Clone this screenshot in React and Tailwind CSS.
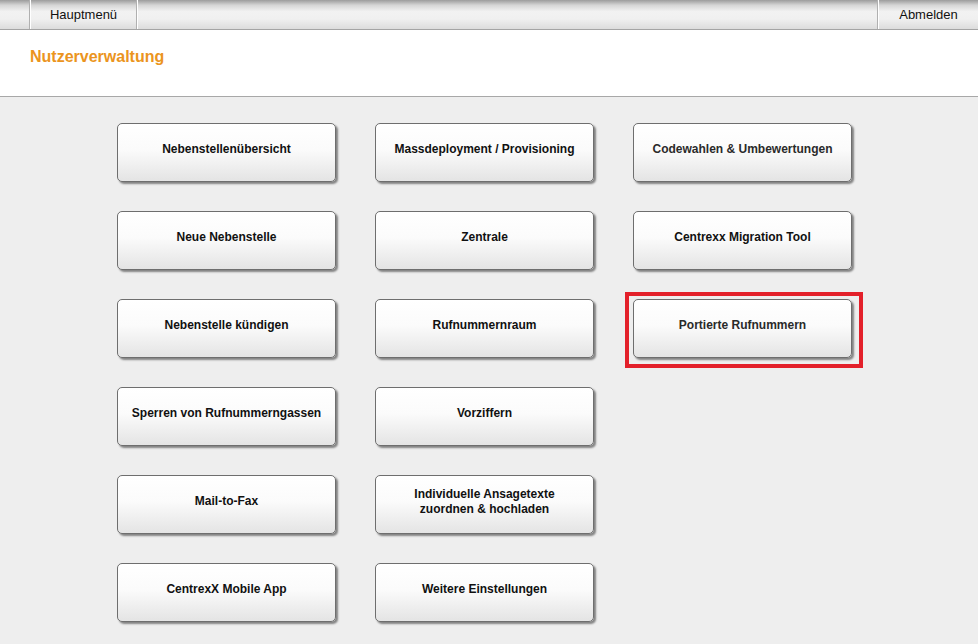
import React from "react";

const bar = "bg-[linear-gradient(to_bottom,#9c9c9c_0%,#d6d6d6_18%,#f2f2f2_40%,#f0f0f0_65%,#dcdcdc_100%)]";

function Btn({ children, light }) {
  return (
    <div
      className={`w-[219px] h-[59px] rounded-[5px] border border-[#6e6e6e] bg-[linear-gradient(to_bottom,#ffffff_0%,#fbfbfb_45%,#e4e4e4_100%)] shadow-[2px_2px_2px_rgba(0,0,0,0.45)] flex items-center justify-center text-center pb-[6px] text-[12px] leading-[15px] font-bold ${light ? "text-[#2a2a2a]" : "text-[#111]"}`}
    >
      {children}
    </div>
  );
}

export default function App() {
  const col1 = [
    "Nebenstellenübersicht",
    "Neue Nebenstelle",
    "Nebenstelle kündigen",
    "Sperren von Rufnummerngassen",
    "Mail-to-Fax",
    "CentrexX Mobile App",
  ];
  const col2 = [
    "Massdeployment / Provisioning",
    "Zentrale",
    "Rufnummernraum",
    "Vorziffern",
    <>Individuelle Ansagetexte<br />zuordnen &amp; hochladen</>,
    "Weitere Einstellungen",
  ];
  return (
    <div className="w-[978px] h-[644px] overflow-hidden bg-[#eeeeee] font-['Liberation_Sans',Arial,sans-serif]">
      <div className={`h-[30px] flex border-b border-[#a4a4a4] ${bar}`}>
        <div className="w-[30px] border-r border-[#b0b0b0]"></div>
        <div className="w-[107px] border-l border-white border-r border-r-[#b0b0b0] flex items-center justify-center text-[13px] text-[#111] pt-[1px]">
          Hauptmenü
        </div>
        <div className="flex-1 border-l border-white border-r border-r-[#b0b0b0]"></div>
        <div className="w-[100px] border-l border-white flex items-center justify-center text-[13px] text-[#111] pt-[1px]">
          Abmelden
        </div>
      </div>
      <div className="h-[67px] bg-white border-b border-[#a8a8a8] pl-[30px] pt-[17px]">
        <div className="text-[16px] font-bold text-[#eb9420] leading-[19px]">Nutzerverwaltung</div>
      </div>
      <div className="flex pl-[117px] pt-[26px] gap-[39px]">
        <div className="flex flex-col gap-[29px]">
          {col1.map((t, i) => (
            <Btn key={i}>{t}</Btn>
          ))}
        </div>
        <div className="flex flex-col gap-[29px]">
          {col2.map((t, i) => (
            <Btn key={i}>{t}</Btn>
          ))}
        </div>
        <div className="flex flex-col gap-[29px]">
          <Btn light>Codewahlen &amp; Umbewertungen</Btn>
          <Btn>Centrexx Migration Tool</Btn>
          <div className="relative">
            <Btn light>Portierte Rufnummern</Btn>
            <div className="absolute -left-[8px] -top-[7px] -right-[11px] -bottom-[10px] border-[4px] border-[#e3202a] pointer-events-none"></div>
          </div>
        </div>
      </div>
    </div>
  );
}
